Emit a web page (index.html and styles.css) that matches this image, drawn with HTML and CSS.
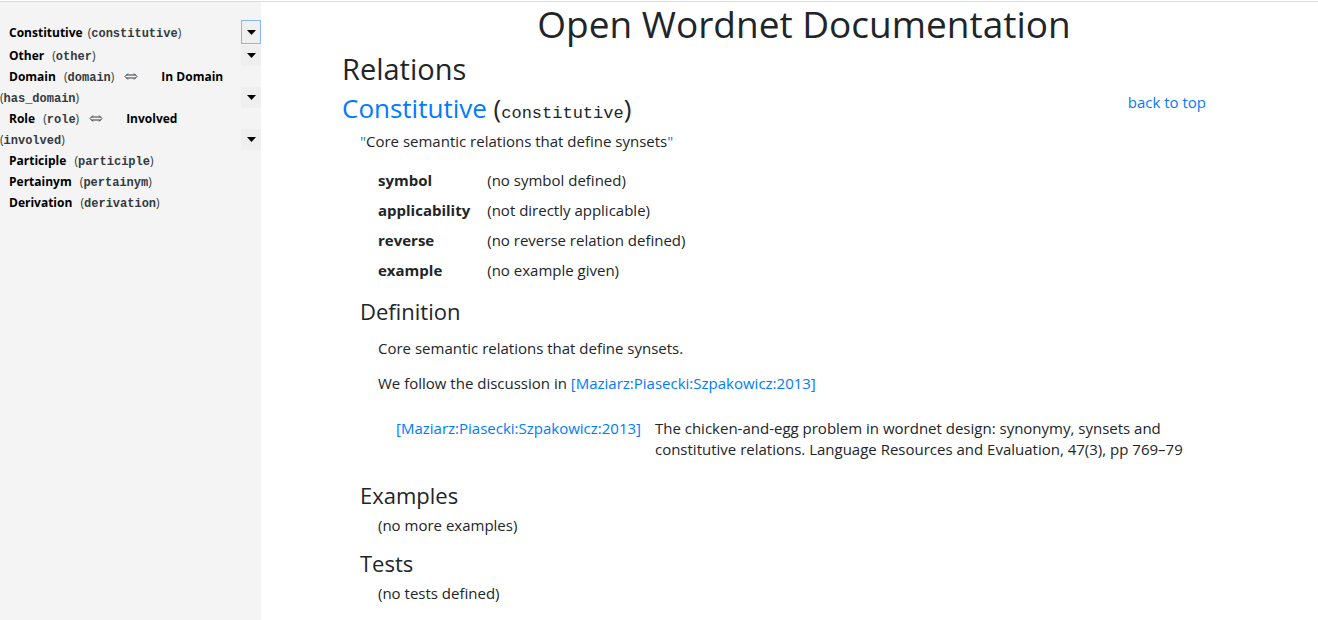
FILE: index.html
```html
<!DOCTYPE html>
<html lang="en">
<head>
<meta charset="utf-8">
<title>Open Wordnet Documentation</title>
<link rel="stylesheet" href="styles.css">
</head>
<body>
<div class="layout" id="top">
  <nav class="sidebar" aria-label="Relations">
    <ul class="relations">
      <li class="relation relation-active"><div class="names"><a href="#constitutive">Constitutive</a><span class="id">(<code>constitutive</code>)</span></div><button class="toggle" type="button" aria-label="Expand Constitutive"><svg viewBox="0 0 9 5"><path d="M0 0h9L4.500 5z"/></svg></button></li>
      <li class="relation"><div class="names"><a href="#other">Other</a> <span class="id">(<code>other</code>)</span></div><button class="toggle" type="button" aria-label="Expand Other"><svg viewBox="0 0 9 5"><path d="M0 0h9L4.500 5z"/></svg></button></li>
      <li class="relation"><div class="names"><a href="#domain">Domain</a> <span class="id">(<code>domain</code>)</span><svg class="both" viewBox="0 0 14 9"><path d="M4 1.500L1 4.500l3 3M10 1.500l3 3-3 3M2.500 3h9M2.500 6h9"/></svg><a href="#has_domain">In Domain</a> <span class="id">(<code>has_domain</code>)</span></div><button class="toggle" type="button" aria-label="Expand Domain"><svg viewBox="0 0 9 5"><path d="M0 0h9L4.500 5z"/></svg></button></li>
      <li class="relation"><div class="names"><a href="#role">Role</a> <span class="id">(<code>role</code>)</span><svg class="both" viewBox="0 0 14 9"><path d="M4 1.500L1 4.500l3 3M10 1.500l3 3-3 3M2.500 3h9M2.500 6h9"/></svg><a href="#involved">Involved</a> <span class="id">(<code>involved</code>)</span></div><button class="toggle" type="button" aria-label="Expand Role"><svg viewBox="0 0 9 5"><path d="M0 0h9L4.500 5z"/></svg></button></li>
      <li class="relation"><div class="names"><a href="#participle">Participle</a> <span class="id">(<code>participle</code>)</span></div></li>
      <li class="relation"><div class="names"><a href="#pertainym">Pertainym</a> <span class="id">(<code>pertainym</code>)</span></div></li>
      <li class="relation"><div class="names"><a href="#derivation">Derivation</a> <span class="id">(<code>derivation</code>)</span></div></li>
    </ul>
  </nav>
  <main class="content">
    <h1>Open Wordnet Documentation</h1>
    <h2>Relations</h2>
    <section id="constitutive">
      <header class="section-head">
        <h3><a href="#constitutive">Constitutive</a> (<code>constitutive</code>)</h3>
        <a class="back" href="#top">back to top</a>
      </header>
      <div class="body">
        <p class="summary"><span class="quote">"</span>Core semantic relations that define synsets<span class="quote">"</span></p>
        <table class="facts">
          <tbody>
            <tr><th scope="row">symbol</th><td>(no symbol defined)</td></tr>
            <tr><th scope="row">applicability</th><td>(not directly applicable)</td></tr>
            <tr><th scope="row">reverse</th><td>(no reverse relation defined)</td></tr>
            <tr><th scope="row">example</th><td>(no example given)</td></tr>
          </tbody>
        </table>
        <h4>Definition</h4>
        <div class="text definition">
          <p>Core semantic relations that define synsets.</p>
          <p>We follow the discussion in <a href="#maziarz2013">[Maziarz:Piasecki:Szpakowicz:2013]</a></p>
          <div class="citation" id="maziarz2013">
            <a href="#maziarz2013">[Maziarz:Piasecki:Szpakowicz:2013]</a>
            <p>The chicken-and-egg problem in wordnet design: synonymy, synsets and constitutive relations. Language Resources and Evaluation, 47(3), pp 769–79</p>
          </div>
        </div>
        <h4>Examples</h4>
        <p class="text">(no more examples)</p>
        <h4>Tests</h4>
        <p class="text">(no tests defined)</p>
      </div>
    </section>
  </main>
</div>
</body>
</html>
```
FILE: styles.css
```css
* { box-sizing: border-box; }

body {
  margin: 0;
  color: #212529;
  background: #fff;
  font: 15px/21px "Open Sans", "Noto Sans", sans-serif;
}

a { color: #007bff; text-decoration: none; }
h1, h2, h3, h4, p, ul { margin: 0; padding: 0; }
h1, h2, h3, h4 { font-weight: 400; }
code { font-family: "Liberation Mono", monospace; line-height: 1; }

.layout {
  display: flex;
  min-height: 100vh;
  border-top: 1px solid #fff;
  box-shadow: inset 0 1px #dadcdc;
}

.sidebar {
  flex: none;
  width: 261px;
  margin-top: 1px;
  padding-top: 18px;
  background: #f4f4f4;
  font-size: 12px;
}

.relations { list-style: none; }
.relation { display: flex; align-items: flex-end; }
.relation-active { align-items: center; margin-bottom: 1px; }
.names { flex: 1; }
.names a { padding: 0 5px 0 9px; color: #000; font-weight: 700; }
.id { color: #343a40; white-space: nowrap; }
.id code { font-size: 12px; font-weight: 700; }

.both {
  width: 14px;
  height: 9px;
  margin: 0 14px 0 10px;
  fill: none;
  stroke: #343a40;
}

.toggle {
  display: grid;
  place-items: center;
  width: 20px;
  height: 21px;
  padding: 0;
  border: 0;
  background: #efefef;
}

.toggle svg { width: 9px; height: 5px; }

.relation-active .toggle {
  height: 24px;
  border: 1px solid #8ab4f8;
}

.content { flex: 1; padding: 2px 52px 16px 81px; }

h1 { font-size: 37px; line-height: 42px; text-align: center; }
h2 { margin-top: 7px; font-size: 29px; line-height: 34px; }
h3 { font-size: 26px; line-height: 30px; }
h3 code { font-size: 17px; }
h4 { font-size: 22px; line-height: 25px; }

.section-head {
  display: flex;
  justify-content: space-between;
  margin-top: 7px;
  padding-right: 60px;
}

.back { line-height: 18px; }

.body { padding: 8px 80px 0 18px; }

.quote { color: #007bff; }

.facts { margin: 14px 0 13px 18px; border-collapse: collapse; }
.facts th, .facts td { padding: 4px 17px 5px 0; text-align: left; }
.facts th { font-weight: 700; }

.text { margin: 7px 0 15px 18px; }
.definition { display: grid; gap: 14px; margin: 14px 0 23px 18px; }

.citation {
  display: flex;
  gap: 14px;
  padding: 10px 0 0 18px;
}
```
